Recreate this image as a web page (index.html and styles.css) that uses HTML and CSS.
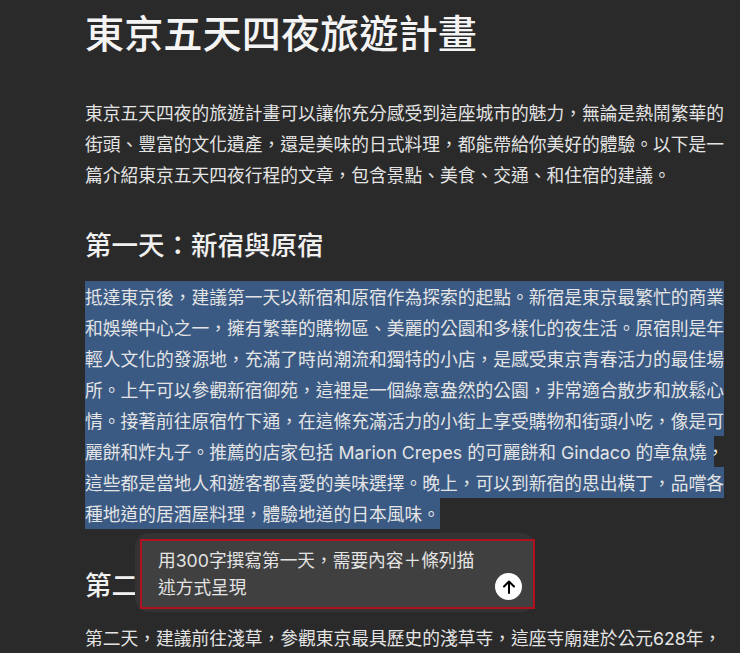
FILE: index.html
```html
<html lang="zh-TW">
    <head>
        <meta charset="UTF-8" />
        <link rel="stylesheet" href="styles.css">
    </head>
    <body>
        <div class="article">
            <h1>東京五天四夜旅遊計畫</h1>
            <p class="intro">東京五天四夜的旅遊計畫可以讓你充分感受到這座城市的魅力，無論是熱鬧繁華的<br>街頭、豐富的文化遺產，還是美味的日式料理，都能帶給你美好的體驗。以下是一<br>篇介紹東京五天四夜行程的文章，包含景點、美食、交通、和住宿的建議。</p>
            <h2 class="first">第一天：新宿與原宿</h2>
            <div class="selected">
                <span>抵達東京後，建議第一天以新宿和原宿作為探索的起點。新宿是東京最繁忙的商業</span>
                <span>和娛樂中心之一，擁有繁華的購物區、美麗的公園和多樣化的夜生活。原宿則是年</span>
                <span>輕人文化的發源地，充滿了時尚潮流和獨特的小店，是感受東京青春活力的最佳場</span>
                <span>所。上午可以參觀新宿御苑，這裡是一個綠意盎然的公園，非常適合散步和放鬆心</span>
                <span>情。接著前往原宿竹下通，在這條充滿活力的小街上享受購物和街頭小吃，像是可</span>
                <span>麗餅和炸丸子。推薦的店家包括 Marion Crepes 的可麗餅和 Gindaco 的章魚燒，</span>
                <span>這些都是當地人和遊客都喜愛的美味選擇。晚上，可以到新宿的思出橫丁，品嚐各</span>
                <span>種地道的居酒屋料理，體驗地道的日本風味。</span>
            </div>
            <h2 class="second">第二</h2>
            <p class="last">第二天，建議前往淺草，參觀東京最具歷史的淺草寺，這座寺廟建於公元628年，</p>
        </div>
        <div class="prompt_shadow">
            <div class="prompt">
                <div class="prompt_text">用300字撰寫第一天，需要內容＋條列描<br>述方式呈現</div>
                <div class="send">
                    <svg width="16" height="16" viewBox="0 0 16 16" fill="none" stroke="#000" stroke-width="2" stroke-linecap="round" stroke-linejoin="round">
                        <path d="M8 14V2.5M3 7.5l5-5 5 5" />
                    </svg>
                </div>
            </div>
        </div>
    </body>
</html>
```

FILE: styles.css
```css
* {
    box-sizing: border-box;
}
html, body {
    height: 100%;
}
body {
    margin: 0;
    overflow: hidden;
    position: relative;
    background: #2a2a2a;
    color: #e4e4e4;
    font-family: "Inter", "Noto Sans CJK TC", sans-serif;
}
.article {
    width: 660px;
    padding-left: 85px;
    font-size: 17.75px;
    line-height: 31px;
    white-space: nowrap;
}
h1 {
    margin: 0;
    padding-top: 6px;
    font-size: 39.2px;
    line-height: 56px;
    font-weight: 500;
    color: #f4f4f4;
}
h2 {
    margin: 0;
    font-size: 26.5px;
    line-height: 38px;
    font-weight: 500;
    color: #f0f0f0;
}
p {
    margin: 0;
}
.intro {
    margin-top: 36px;
}
.first {
    margin-top: 35px;
}
.selected {
    margin-top: 17px;
}
.selected span {
    display: block;
    width: 639px;
    height: 31px;
    padding-top: 1px;
    background: #3a5a84;
}
.selected span:nth-child(6) {
    width: 629px;
}
.selected span:last-child {
    width: 355px;
}
.second {
    margin-top: 37px;
}
.last {
    margin-top: 19px;
}
.prompt_shadow {
    position: absolute;
    left: 135px;
    top: 533px;
    width: 400px;
    height: 79px;
    padding: 6px 0 3px 5px;
    background: #333333;
    border-radius: 14px;
}
.prompt {
    height: 70px;
    padding: 6px 11px 0 16px;
    display: flex;
    justify-content: space-between;
    background: #404040;
    border: 2px solid #b01020;
    color: #e4e4e4;
    font-size: 17.7px;
    line-height: 27px;
}
.send {
    align-self: flex-end;
    margin-bottom: 7px;
    width: 27px;
    height: 27px;
    border-radius: 50%;
    background: #fff;
    display: flex;
    align-items: center;
    justify-content: center;
}
```
